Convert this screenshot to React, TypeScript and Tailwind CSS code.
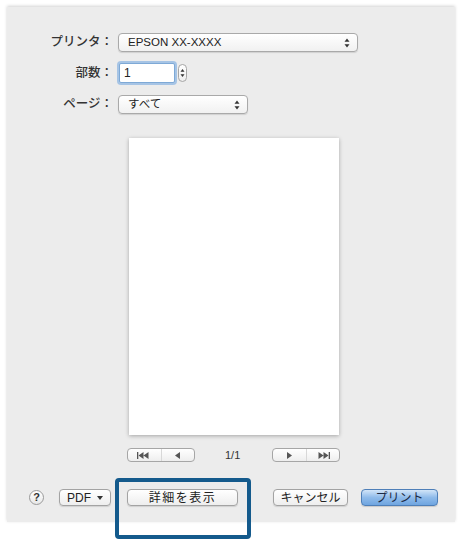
import React from "react";

const font = "font-['Liberation_Sans','Noto_Sans_CJK_JP',sans-serif]";

function UpDown({ className = "" }: { className?: string }) {
  return (
    <svg width="6" height="10" viewBox="0 0 6 10" className={className}>
      <path d="M3 0.5 L5.5 3.8 L0.5 3.8 Z" fill="#333" />
      <path d="M3 9.5 L5.5 6.2 L0.5 6.2 Z" fill="#333" />
    </svg>
  );
}

function SelectBox({ text, width }: { text: string; width: string }) {
  return (
    <div
      className={`${width} h-[19px] flex items-center justify-between pl-[9px] pr-[7px] rounded-[4px] border border-[#a9a9a9] bg-gradient-to-b from-white to-[#f1f1f1] shadow-[0_1px_1px_rgba(0,0,0,0.12)]`}
    >
      <span className="text-[11.5px] text-[#222] leading-none">{text}</span>
      <UpDown />
    </div>
  );
}

function NavButton({ side }: { side: "left" | "right" }) {
  return (
    <div className="w-[68px] h-[14px] flex rounded-[4px] border border-[#a6a6a6] bg-gradient-to-b from-white to-[#eeeeee]">
      <div className="flex-1 flex items-center justify-center border-r border-[#d8d8d8]">
        {side === "left" ? (
          <svg width="14" height="7" viewBox="0 0 14 7">
            <rect x="0" y="0" width="1.3" height="7" fill="#555" />
            <path d="M1.5 3.5 L6.5 0 L6.5 7 Z M6.5 3.5 L11.5 0 L11.5 7 Z" fill="#555" />
          </svg>
        ) : (
          <svg width="7" height="7" viewBox="0 0 7 7">
            <path d="M1 0 L6 3.5 L1 7 Z" fill="#555" />
          </svg>
        )}
      </div>
      <div className="flex-1 flex items-center justify-center">
        {side === "left" ? (
          <svg width="7" height="7" viewBox="0 0 7 7">
            <path d="M6 0 L1 3.5 L6 7 Z" fill="#555" />
          </svg>
        ) : (
          <svg width="14" height="7" viewBox="0 0 14 7">
            <path d="M2.5 0 L7.5 3.5 L2.5 7 Z M7.5 0 L12.5 3.5 L7.5 7 Z" fill="#555" />
            <rect x="12.7" y="0" width="1.3" height="7" fill="#555" />
          </svg>
        )}
      </div>
    </div>
  );
}

function Btn({ children, className = "" }: { children: React.ReactNode; className?: string }) {
  return (
    <div
      className={`h-[17px] flex items-center justify-center rounded-[4px] border border-[#a3a3a3] bg-gradient-to-b from-white to-[#eeeeee] shadow-[0_1px_1px_rgba(0,0,0,0.12)] text-[12px] text-[#222] leading-none ${className}`}
    >
      {children}
    </div>
  );
}

export default function App() {
  return (
    <div className={`relative w-[459px] h-[539px] bg-white pt-[7px] pl-[7px] overflow-hidden ${font}`}>
      <div className="w-[448px] h-[515px] bg-[#ececec] shadow-[0_-1px_3px_rgba(0,0,0,0.18)] flex flex-col">
        {/* form rows */}
        <div className="mt-[26px] flex items-center">
          <div className="w-[110px] text-right pr-[4px] text-[12.5px] font-medium text-[#333] leading-none">プリンタ：</div>
          <div className="ml-[1px]">
            <SelectBox text="EPSON XX-XXXX" width="w-[240px]" />
          </div>
        </div>
        <div className="mt-[11px] flex items-center">
          <div className="w-[110px] text-right pr-[4px] text-[12.5px] font-medium text-[#333] leading-none">部数：</div>
          <div className="ml-[2px] flex items-center gap-[3px]">
            <div className="w-[56px] h-[20px] flex items-center pl-[4px] bg-white border border-[#7ea9d6] rounded-[2px] shadow-[0_0_0_2px_rgba(120,170,225,0.6)]">
              <span className="text-[12px] text-[#222] leading-none">1</span>
            </div>
            <div className="w-[9px] h-[18px] rounded-full border border-[#a6a6a6] bg-gradient-to-b from-white to-[#eee] flex items-center justify-center">
              <svg width="5" height="10" viewBox="0 0 5 10">
                <path d="M2.5 1 L4.5 3.8 L0.5 3.8 Z" fill="#333" />
                <path d="M2.5 9 L4.5 6.2 L0.5 6.2 Z" fill="#333" />
              </svg>
            </div>
          </div>
        </div>
        <div className="mt-[12px] flex items-center">
          <div className="w-[110px] text-right pr-[4px] text-[12.5px] font-medium text-[#333] leading-none">ページ：</div>
          <div className="ml-[1px]">
            <SelectBox text="すべて" width="w-[130px]" />
          </div>
        </div>

        {/* preview page */}
        <div className="mt-[24px] ml-[122px] w-[210px] h-[297px] bg-white shadow-[0_1px_4px_rgba(0,0,0,0.3)]" />

        {/* page navigation */}
        <div className="mt-[13px] ml-[120px] flex items-center">
          <NavButton side="left" />
          <span className="ml-[30px] w-[20px] text-[11px] text-[#333] leading-none">1/1</span>
          <div className="ml-[27px]">
            <NavButton side="right" />
          </div>
        </div>

        {/* bottom buttons */}
        <div className="mt-[27px] flex items-center">
          <div className="ml-[22px] w-[15px] h-[15px] rounded-full border border-[#9a9a9a] bg-gradient-to-b from-white to-[#e8e8e8] flex items-center justify-center text-[11px] font-bold text-[#333] leading-none">
            ?
          </div>
          <Btn className="ml-[15px] w-[52px] gap-[6px] text-[11px]">
            <span>PDF</span>
            <svg width="6" height="4" viewBox="0 0 6 4">
              <path d="M0 0 L6 0 L3 4 Z" fill="#333" />
            </svg>
          </Btn>
          <Btn className="ml-[16px] w-[111px] tracking-[1.5px]">詳細を表示</Btn>
          <Btn className="ml-[35px] w-[75px]">キャンセル</Btn>
          <div className="ml-[13px] w-[77px] h-[17px] flex items-center justify-center rounded-[4px] border border-[#4e7fb8] bg-gradient-to-b from-[#d2e5f8] via-[#8fbbea] to-[#6fa5e0] shadow-[0_1px_1px_rgba(0,0,0,0.15)] text-[12px] text-[#1c2a44] leading-none">
            プリント
          </div>
        </div>
      </div>

      {/* highlight annotation */}
      <div className="absolute left-[115px] top-[478px] w-[136px] h-[61px] border-[4px] border-[#145a8c] rounded-[4px]" />
    </div>
  );
}
